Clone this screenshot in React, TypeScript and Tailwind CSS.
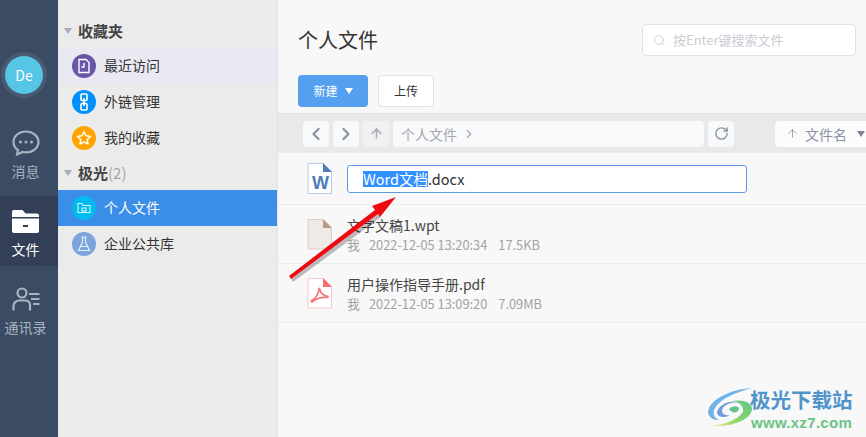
import { ArrowUp, ChevronLeft, ChevronRight, RotateCw, Search } from "lucide-react";

const font = "font-['Noto_Sans_CJK_SC','Liberation_Sans',sans-serif]";

const Caret = ({ className = "" }: { className?: string }) => (
  <svg width="8" height="6" viewBox="0 0 8 6" className={className}>
    <path d="M0 0h8L4 6z" fill="currentColor" />
  </svg>
);

const RecentIcon = () => (
  <svg width="14" height="16" viewBox="0 0 14 16" fill="none" stroke="#fff" strokeWidth="1.4">
    <path d="M2 1.500h7l3 3v10H2z" />
    <path d="M7 5v4H4.500" />
  </svg>
);
const LinkIcon = () => (
  <svg width="10" height="18" viewBox="0 0 10 18" fill="none" stroke="#fff" strokeWidth="1.600">
    <rect x="2" y="1" width="6" height="6.500" rx="1" />
    <rect x="2" y="10.500" width="6" height="6.500" rx="1" />
    <path d="M5 5v8" />
  </svg>
);
const StarIcon = () => (
  <svg width="16" height="16" viewBox="0 0 16 16" fill="none" stroke="#fff" strokeWidth="1.400" strokeLinejoin="round">
    <path d="M8 1.500l2 4.300 4.600.6-3.400 3.100.9 4.600L8 11.800l-4.100 2.300.9-4.600L1.400 6.400 6 5.800z" />
  </svg>
);
const FolderSmall = () => (
  <svg width="14" height="12" viewBox="0 0 14 12" fill="none" stroke="#d8f4ff" strokeWidth="1.100">
    <path d="M1 10.500V1.500h4l1 2h7v7z" />
    <rect x="5" y="6" width="4" height="3" />
  </svg>
);
const FlaskIcon = () => (
  <svg width="14" height="16" viewBox="0 0 14 16" fill="none" stroke="#e8eef8" strokeWidth="1.200">
    <path d="M4.500 1h5M5.500 1v5L1.500 14.500h11L8.500 6V1M3.500 10.500h7" />
  </svg>
);

const ChatIcon = () => (
  <svg width="28" height="26" viewBox="0 0 28 26" fill="none">
    <path d="M14 1.500C7 1.500 1.500 6 1.500 12c0 3.300 1.700 6.200 4.400 8.200L5 24.500l5.600-2.500c1.100.3 2.200.4 3.400.4 7 0 12.500-4.600 12.500-10.400S21 1.500 14 1.500z" stroke="#a9b2c0" strokeWidth="2.200" />
    <circle cx="8.500" cy="12" r="1.500" fill="#a9b2c0" />
    <circle cx="14" cy="12" r="1.500" fill="#a9b2c0" />
    <circle cx="19.500" cy="12" r="1.500" fill="#a9b2c0" />
  </svg>
);
const FolderIcon = () => (
  <svg width="27" height="23" viewBox="0 0 27 23">
    <path d="M2 0h8.500l3 3.500H25a2 2 0 0 1 2 2V7H0V2a2 2 0 0 1 2-2z" fill="#fff" />
    <path d="M0 8.500h27V21a2 2 0 0 1-2 2H2a2 2 0 0 1-2-2z" fill="#fff" />
    <rect x="11" y="15" width="5" height="2" fill="#323f56" />
  </svg>
);
const ContactsIcon = () => (
  <svg width="28" height="24" viewBox="0 0 28 24" fill="none" stroke="#a9b2c0" strokeWidth="2.200">
    <circle cx="10" cy="6" r="4.500" />
    <path d="M1.500 23.500V19c0-3 2.500-5.500 5.500-5.500h6c2.500 0 4.500 1.500 5 3.500v6.500" />
    <path d="M17 7h10.500M19 12h8.500M21 17h6.500" />
  </svg>
);

const WordFile = () => (
  <svg width="25" height="31" viewBox="0 0 25 31" className="shrink-0">
    <path d="M1 .5h15l8.500 8.500v21.500H1z" fill="#fff" stroke="#b9cbe4" />
    <path d="M16 0l9 9h-9z" fill="#4e7cb8" />
    <text x="13.500" y="26" textAnchor="middle" fontSize="18" fontWeight="700" fill="#4e7cb8" fontFamily="Liberation Sans">W</text>
  </svg>
);
const WptFile = () => (
  <svg width="25" height="31" viewBox="0 0 25 31" className="shrink-0">
    <path d="M1 .5h15l8.500 8.500v21H1z" fill="#efeae6" stroke="#dccfc5" />
    <path d="M16 0l9 9h-9z" fill="#b89c87" />
  </svg>
);
const PdfFile = () => (
  <svg width="25" height="31" viewBox="0 0 25 31" className="shrink-0">
    <path d="M1 .5h15l8.500 8.500v21H1z" fill="#fff" stroke="#fbc4c4" />
    <path d="M16 0l9 9h-9z" fill="#f96a6a" />
    <path d="M12 11c-.5 4-3 9-7 11.500-1.500 1 0 2 1 1C8 21 14 19 20 19.500c1.500 0 1.500-1.500 0-1.500-4-.2-7-4-7.200-7-.1-1-.7-1-.8 0z" fill="none" stroke="#f47878" strokeWidth="1.700" />
  </svg>
);

const NavItem = ({ icon, label, active = false }: { icon: React.ReactNode; label: string; active?: boolean }) => (
  <div className={`flex h-[70px] flex-col items-center pt-[10px] pr-[7px] ${active ? "bg-[#323f56] text-white" : "text-[#a9b2c0]"}`}>
    <div className="flex h-[30px] items-center">{icon}</div>
    <div className="mt-[3px] text-sm leading-5">{label}</div>
  </div>
);

const TreeHeader = ({ label, count }: { label: string; count?: string }) => (
  <div className="relative flex h-[34px] items-center pl-5 text-[15px] font-bold leading-5 text-[#444]">
    <Caret className="absolute left-[6px] top-[14px] text-[#a9adb8]" />
    <span>{label}</span>
    {count && <span className="font-normal text-[#a8a8a8]">{count}</span>}
  </div>
);

const TreeItem = ({ icon, color, label, className = "text-[#333]" }: { icon: React.ReactNode; color: string; label: string; className?: string }) => (
  <div className={`flex h-9 items-center gap-2 pl-[14px] text-sm ${className}`}>
    <div className={`flex h-6 w-6 items-center justify-center rounded-full ${color}`}>{icon}</div>
    <span className="pb-[2px]">{label}</span>
  </div>
);

const FileRow = ({ icon, name, meta, size }: { icon: React.ReactNode; name: string; meta: string; size: string }) => (
  <div className="flex h-[59px] shrink-0 items-center gap-[15px] border-b border-[#ebebf0] pl-[29px]">
    {icon}
    <div>
      <div className="text-sm leading-5 text-[#444]">{name}</div>
      <div className="mt-[2px] flex text-[12.800px] leading-4 text-[#a3a3a3]">
        <span className="w-[22px]">我</span>
        <span className="whitespace-nowrap">{meta}</span>
        <span className="ml-[11px] whitespace-nowrap">{size}</span>
      </div>
    </div>
  </div>
);

export default function App() {
  return (
    <div className={`relative flex h-[437px] w-[866px] overflow-hidden bg-[#f8f8f8] ${font}`}>
      {/* left rail */}
      <div className="flex w-[58px] shrink-0 flex-col bg-[#3b4b63]">
        <div className="mt-[52px] ml-[1px] flex h-[46px] w-[46px] items-center justify-center rounded-full bg-[#4a5a72]">
          <div className="flex h-[38px] w-[38px] items-center justify-center rounded-full bg-[#55c6e6] text-sm text-white">De</div>
        </div>
        <div className="mt-5 flex flex-col gap-2">
          <NavItem icon={<ChatIcon />} label="消息" />
          <NavItem icon={<FolderIcon />} label="文件" active />
          <NavItem icon={<ContactsIcon />} label="通讯录" />
        </div>
      </div>

      {/* tree */}
      <div className="w-[220px] shrink-0 border-r border-[#e2e2e2] bg-[#ebebeb] pt-[14px]">
        <TreeHeader label="收藏夹" />
        <TreeItem icon={<RecentIcon />} color="bg-[#6a55a8]" label="最近访问" className="bg-[#e9e9f1] text-[#333]" />
        <TreeItem icon={<LinkIcon />} color="bg-[#0090fb]" label="外链管理" />
        <TreeItem icon={<StarIcon />} color="bg-[#ffa400]" label="我的收藏" />
        <TreeHeader label="极光" count="(2)" />
        <TreeItem icon={<FolderSmall />} color="bg-[#00bbee]" label="个人文件" className="bg-[#3a8ee8] text-white" />
        <TreeItem icon={<FlaskIcon />} color="bg-[#7ba5dc]" label="企业公共库" />
      </div>

      {/* main */}
      <div className="flex min-w-0 flex-1 flex-col overflow-hidden">
        <div className="flex h-[75px] shrink-0 items-start justify-between pl-5 pr-[10px]">
          <h1 className="mt-[25px] text-xl leading-[30px] text-[#333]">个人文件</h1>
          <div className="mt-6 flex h-[32px] w-[214px] items-center gap-[7px] rounded border border-[#e0e0e8] bg-white pl-[10px] text-[13px] text-[#c8ccd4]">
            <Search size={13} strokeWidth={1.600} />
            <span>按Enter键搜索文件</span>
          </div>
        </div>
        <div className="flex h-[38px] shrink-0 gap-[10px] pl-5">
          <div className="flex h-8 w-[70px] items-center justify-center gap-[7px] rounded bg-[#549ff0] text-xs text-white">
            新建
            <Caret />
          </div>
          <div className="flex h-8 w-14 items-center justify-center rounded border border-[#e0e0e8] bg-white text-xs text-[#333]">上传</div>
        </div>

        <div className="flex h-[40px] shrink-0 items-center border-t border-[#dedede] bg-[#e9e9e9] pl-[25px]">
          <div className="flex h-[26px] w-[26px] shrink-0 items-center justify-center rounded bg-[#f8f9fb] text-[#8a93a3]"><ChevronLeft size={20} strokeWidth={2.600} /></div>
          <div className="ml-1 flex h-[26px] w-[26px] shrink-0 items-center justify-center rounded bg-[#f8f9fb] text-[#8a93a3]"><ChevronRight size={20} strokeWidth={2.600} /></div>
          <div className="ml-1 flex h-[26px] w-[26px] shrink-0 items-center justify-center rounded bg-[#f1f1f2] text-[#a9b0bc]"><ArrowUp size={15} strokeWidth={2.600} /></div>
          <div className="ml-1 flex h-[26px] w-[311px] shrink-0 items-center gap-[5px] rounded bg-[#f8f9fb] pl-2 text-sm text-[#a5a8ae]">
            个人文件
            <ChevronRight size={14} strokeWidth={2} />
          </div>
          <div className="ml-1 flex h-[26px] w-[26px] shrink-0 items-center justify-center rounded bg-[#f8f9fb] text-[#8a93a3]"><RotateCw size={15} strokeWidth={2.200} /></div>
          <div className="ml-[41px] flex h-[26px] w-[92px] shrink-0 items-center rounded-l bg-[#fcfcfd] pl-[11px] text-sm text-[#8a93a3]">
            <ArrowUp size={13} strokeWidth={1.600} className="shrink-0" />
            <span className="ml-[6px] whitespace-nowrap">文件名</span>
            <Caret className="ml-[10px] shrink-0 text-[#7e8693]" />
          </div>
        </div>

        <div className="flex h-[52px] shrink-0 items-center gap-[15px] border-b border-[#ebebf0] pl-[29px]">
          <WordFile />
          <div className="flex h-7 w-[400px] items-center rounded-[3px] border border-[#5d9be6] bg-white pl-[15px] text-[14.500px] text-[#333]">
            <span className="inline-block bg-[#3390ff] leading-4 text-white">Word文档</span>
            <span className="leading-4">.docx</span>
          </div>
        </div>
        <FileRow icon={<WptFile />} name="文字文稿1.wpt" meta="2022-12-05 13:20:34" size="17.5KB" />
        <FileRow icon={<PdfFile />} name="用户操作指导手册.pdf" meta="2022-12-05 13:09:20" size="7.09MB" />
      </div>

      {/* annotation arrow */}
      <svg className="absolute left-[280px] top-[190px]" width="130" height="100" viewBox="0 0 130 100">
        <path d="M11 89L98 24l3 3L13 92z" fill="#000" opacity="0.25" />
        <path d="M9 86L95 20l-3-4 24-9-16 20-2-3L11 89z" fill="#ee0a10" />
      </svg>

      {/* watermark */}
      <div className="absolute left-[707px] top-[387px] flex items-start">
        <svg width="46" height="40" viewBox="0 0 46 40" fill="none">
          <defs>
            <linearGradient id="swirlGreen" x1="1" y1="0" x2="0" y2="1">
              <stop offset="0" stopColor="#5fc48a" />
              <stop offset="0.6" stopColor="#8ed86a" />
              <stop offset="1" stopColor="#f1e39a" />
            </linearGradient>
          </defs>
          <path d="M45 1C28 2 8 9 2 21c-3 7 2 12 10 12-5-2-7-7-4-12C14 11 30 5 45 1z" fill="#70b3e8" />
          <path d="M10 26c1-8 12-13 22-11-10 0-17 4-17 9 0 3 4 5 8 4-4 3-12 3-13-2z" fill="#6f9fd8" />
          <path d="M25 14c11-2 19 1 20 7 1 9-15 19-39 18 14-2 28-8 30-15 1-5-4-9-11-10z" fill="url(#swirlGreen)" />
          <path d="M22 22c4-4 10-3 10 0-1 4-7 5-10 0z" fill="#63c28e" />
        </svg>
        <div className="ml-[-3px] flex flex-col">
          <span className="text-[20.500px] font-bold leading-6 text-[#4f94cb]">极光下载站</span>
          <span className="ml-px mt-[2px] font-['Liberation_Sans',sans-serif] text-[15px] font-bold leading-5 tracking-[0.3px] text-[#6ac383]">www.xz7.com</span>
        </div>
      </div>
    </div>
  );
}
